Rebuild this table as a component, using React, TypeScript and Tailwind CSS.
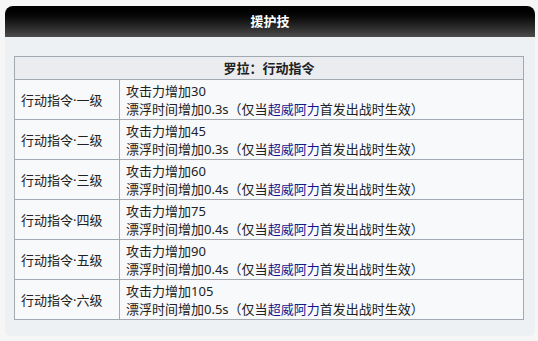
const rows = [
  { level: "一级", atk: "30", time: "0.3s" },
  { level: "二级", atk: "45", time: "0.3s" },
  { level: "三级", atk: "60", time: "0.4s" },
  { level: "四级", atk: "75", time: "0.4s" },
  { level: "五级", atk: "90", time: "0.4s" },
  { level: "六级", atk: "105", time: "0.5s" },
];

export default function App() {
  return (
    <div
      className="h-[341px] w-[538px] bg-[#f6f6f7] pt-[6px] text-[13px] text-[#202122]"
      style={{ fontFamily: '"Noto Sans", "Noto Sans CJK SC", sans-serif' }}
    >
      <div className="mx-[5px] w-[530px] overflow-hidden rounded-t-[8px] rounded-b-[6px] bg-[#eef1f3]">
        <div className="flex h-[31px] items-center justify-center bg-gradient-to-b from-[#000000] to-[#4d4d4d] text-[13px] font-bold text-white">
          援护技
        </div>
        <div className="px-[9px] pt-[19px] pb-[16px]">
          <table className="w-[510px] border-collapse border border-[#a2a9b1] leading-[18px]">
            <thead>
              <tr className="h-[23px] bg-[#eaecf0]">
                <th colSpan={2} className="border border-[#a2a9b1] font-bold">
                  罗拉：行动指令
                </th>
              </tr>
            </thead>
            <tbody>
              {rows.map((row) => (
                <tr key={row.level} className="h-[40px] bg-[#f8f9fa]">
                  <td className="w-[105px] border border-[#a2a9b1] px-[6px]">
                    行动指令·{row.level}
                  </td>
                  <td className="border border-[#a2a9b1] px-[6px]">
                    攻击力增加{row.atk}
                    <br />
                    漂浮时间增加{row.time}（仅当
                    <span className="text-[#14148a]">超威阿力</span>
                    首发出战时生效）
                  </td>
                </tr>
              ))}
            </tbody>
          </table>
        </div>
      </div>
    </div>
  );
}
